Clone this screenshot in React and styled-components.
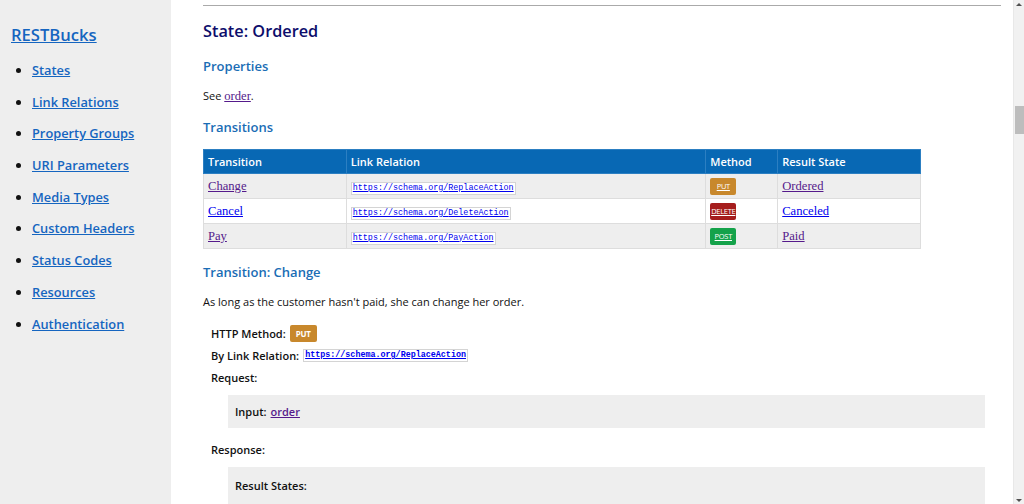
import React from "react";
import styled, { createGlobalStyle } from "styled-components";

const GlobalStyle = createGlobalStyle`
  html, body {
    margin: 0;
    padding: 0;
    background: #fff;
    overflow: hidden;
  }
  body {
    font-family: "Open Sans", "DejaVu Sans", sans-serif;
    color: #111;
  }
`;

const Page = styled.div`
  display: flex;
  width: 1024px;
  height: 504px;
  overflow: hidden;
`;

const Sidebar = styled.nav`
  width: 171px;
  flex: none;
  background: #eeeeee;
  padding: 24px 0 0 11px;
  box-sizing: border-box;
`;

const SiteTitle = styled.a`
  display: block;
  font-size: 16.6px;
  font-weight: 600;
  line-height: 22px;
  color: #1565c0;
  text-decoration: underline;
  margin-bottom: 14px;
`;

const NavList = styled.ul`
  margin: 0;
  padding: 0 0 0 21px;
  list-style: disc;
`;

const NavItem = styled.li`
  font-size: 12.8px;
  font-weight: 600;
  line-height: 20px;
  margin-bottom: 11.7px;
  color: #111;

  a {
    color: #1565c0;
    text-decoration: underline;
  }
`;

const Main = styled.main`
  flex: 1;
  padding: 5px 12px 0 32px;
  box-sizing: border-box;
  overflow: hidden;
`;

const Rule = styled.hr`
  margin: 0;
  border: 0;
  border-top: 1px solid #aaaaaa;
`;

const StateTitle = styled.h1`
  margin: 14px 0 0;
  font-size: 16.3px;
  line-height: 22px;
  font-weight: 600;
  color: #0d0d6b;
`;

const SectionTitle = styled.h2`
  margin: ${(p) => p.$top || 13}px 0 0;
  font-size: 13px;
  line-height: 18px;
  font-weight: 600;
  color: #1a6db5;
`;

const Text = styled.p`
  margin: ${(p) => p.$top || 13}px 0 0;
  font-size: ${(p) => p.$size || 11}px;
  line-height: 16px;
`;

const VisitedLink = styled.a`
  color: #551a8b;
  text-decoration: underline;
  font-family: ${(p) => (p.$serif ? '"Liberation Serif", serif' : "inherit")};
  font-size: ${(p) => (p.$serif ? "12.6px" : "inherit")};
  font-weight: ${(p) => (p.$serif ? 400 : "inherit")};
`;

const PlainLink = styled(VisitedLink)`
  color: #0000ee;
`;

const Table = styled.table`
  margin-top: 13px;
  width: 718px;
  border-collapse: collapse;
  font-size: 11px;
`;

const Th = styled.th`
  background: #0868b4;
  color: #fff;
  text-align: left;
  font-weight: 600;
  height: 24px;
  padding: 0 4px;
  border: 1px solid #2c7fc2;
  width: ${(p) => p.$w}px;
  box-sizing: border-box;
`;

const Tr = styled.tr`
  background: ${(p) => (p.$alt ? "#eeeeee" : "#ffffff")};
`;

const Td = styled.td`
  height: 25px;
  padding: 0 4px;
  border: 1px solid #dddddd;
  box-sizing: border-box;
`;

const Code = styled.code`
  display: inline-block;
  font-family: "Liberation Mono", "DejaVu Sans Mono", monospace;
  font-size: 8.4px;
  line-height: 11px;
  padding: 0 1px;
  background: #fff;
  border: 1px solid #d4d4d4;

  a {
    color: #0000ee;
    text-decoration: underline;
  }
`;

const methodColors = {
  PUT: "#c8882c",
  DELETE: "#a51d1d",
  POST: "#14a24a",
};

const Badge = styled.span`
  display: inline-flex;
  align-items: center;
  justify-content: center;
  width: ${(p) => (p.$large ? 27 : 26)}px;
  height: 17px;
  border-radius: 2px;
  background: ${(p) => methodColors[p.$method]};
  color: #fff;
  font-size: ${(p) => (p.$large ? 8 : 7.5)}px;
  font-weight: ${(p) => (p.$large ? 700 : 400)};
  text-decoration: ${(p) => (p.$large ? "none" : "underline")};
  letter-spacing: -0.3px;
  overflow: hidden;
  white-space: nowrap;
  vertical-align: middle;
`;

const Details = styled.div`
  padding-left: 8px;
  margin-top: 15px;
`;

const Term = styled.div`
  display: flex;
  align-items: center;
  gap: 4px;
  font-size: 11px;
  font-weight: 600;
  height: 17px;
  margin-bottom: 5px;
`;

const Block = styled.div`
  margin: 9px 0 13px 17px;
  background: #eeeeee;
  width: 757px;
  height: ${(p) => p.$h || 33}px;
  padding: ${(p) => (p.$top ? "11px 7px 0" : "0 7px")};
  box-sizing: border-box;
  display: flex;
  align-items: ${(p) => (p.$top ? "flex-start" : "center")};
  font-size: 11px;
  font-weight: 600;
  line-height: 16px;
  gap: 4px;
`;

const Scrollbar = styled.div`
  width: 11px;
  flex: none;
  background: #f1f1f1;
  border-left: 1px solid #e8e8e8;
  display: flex;
  flex-direction: column;
  align-items: center;
  padding: 3px 0 2px;
  box-sizing: border-box;
`;

const Arrow = styled.div`
  width: 0;
  height: 0;
  border-left: 3px solid transparent;
  border-right: 3px solid transparent;
  ${(p) => (p.$down ? "border-top" : "border-bottom")}: 3px solid #505050;
`;

const Thumb = styled.div`
  width: 9px;
  height: 28px;
  background: #bdbdbd;
  margin-top: 100px;
`;

const Spacer = styled.div`
  flex: 1;
`;

const navItems = [
  "States",
  "Link Relations",
  "Property Groups",
  "URI Parameters",
  "Media Types",
  "Custom Headers",
  "Status Codes",
  "Resources",
  "Authentication",
];

const transitions = [
  { name: "Change", rel: "ReplaceAction", method: "PUT", result: "Ordered", visited: true },
  { name: "Cancel", rel: "DeleteAction", method: "DELETE", result: "Canceled" },
  { name: "Pay", rel: "PayAction", method: "POST", result: "Paid", visited: true },
];

export default function App() {
  return (
    <Page>
      <GlobalStyle />
      <Sidebar>
        <SiteTitle href="#">RESTBucks</SiteTitle>
        <NavList>
          {navItems.map((item) => (
            <NavItem key={item}>
              <a href="#">{item}</a>
            </NavItem>
          ))}
        </NavList>
      </Sidebar>

      <Main>
        <Rule />
        <StateTitle>State: Ordered</StateTitle>
        <SectionTitle $top={15}>Properties</SectionTitle>
        <Text $top={13}>
          See <VisitedLink href="#" $serif>order</VisitedLink>.
        </Text>
        <SectionTitle $top={14}>Transitions</SectionTitle>
        <Table>
          <thead>
            <tr>
              <Th $w={143}>Transition</Th>
              <Th $w={360}>Link Relation</Th>
              <Th $w={72}>Method</Th>
              <Th $w={143}>Result State</Th>
            </tr>
          </thead>
          <tbody>
            {transitions.map((t, i) => {
              const Link = t.visited ? VisitedLink : PlainLink;
              return (
                <Tr key={t.name} $alt={i % 2 === 0}>
                  <Td>
                    <Link href="#" $serif>
                      {t.name}
                    </Link>
                  </Td>
                  <Td>
                    <Code>
                      <a href="#">https://schema.org/{t.rel}</a>
                    </Code>
                  </Td>
                  <Td>
                    <Badge $method={t.method}>{t.method}</Badge>
                  </Td>
                  <Td>
                    <Link href="#" $serif>
                      {t.result}
                    </Link>
                  </Td>
                </Tr>
              );
            })}
          </tbody>
        </Table>

        <SectionTitle $top={14}>Transition: Change</SectionTitle>
        <Text $top={13}>
          As long as the customer hasn't paid, she can change her order.
        </Text>

        <Details>
          <Term>
            HTTP Method:
            <Badge $method="PUT" $large>
              PUT
            </Badge>
          </Term>
          <Term>
            By Link Relation:
            <Code>
              <a href="#">https://schema.org/ReplaceAction</a>
            </Code>
          </Term>
          <Term>Request:</Term>
          <Block>
            Input: <VisitedLink href="#">order</VisitedLink>
          </Block>
          <Term>Response:</Term>
          <Block $h={60} $top>
            Result States:
          </Block>
        </Details>
      </Main>

      <Scrollbar>
        <Arrow />
        <Thumb />
        <Spacer />
        <Arrow $down />
      </Scrollbar>
    </Page>
  );
}
